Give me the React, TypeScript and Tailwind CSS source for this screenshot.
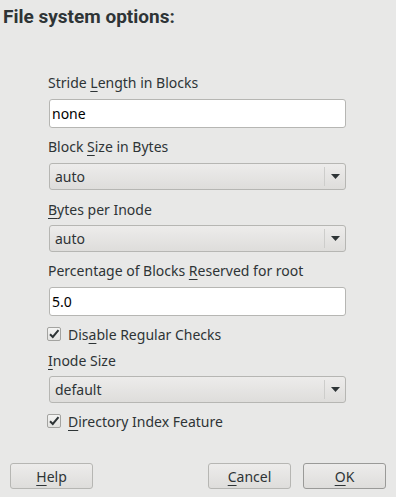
import React from "react";

const font = { fontFamily: '"Noto Sans", "Open Sans", sans-serif' };

function U({ children }: { children: React.ReactNode }) {
  return <span className="underline decoration-1 underline-offset-[3px]">{children}</span>;
}

function Label({ children, className = "" }: { children: React.ReactNode; className?: string }) {
  return (
    <div className={`h-[20px] leading-[20px] text-[14px] text-[#2e3436] -ml-px ${className}`}>{children}</div>
  );
}

function Entry({ value, className = "" }: { value: string; className?: string }) {
  return (
    <div
      className={`h-[29px] rounded-[3px] border border-[#b6b6b3] bg-white flex items-center pl-[2px] text-[14px] text-black ${className}`}
    >
      {value}
    </div>
  );
}

function Combo({ value, className = "" }: { value: string; className?: string }) {
  return (
    <div
      className={`h-[27px] rounded-[3px] border border-[#b6b6b3] bg-gradient-to-b from-[#edeceb] to-[#dedddb] flex items-center text-[14px] text-[#2e3436] ${className}`}
    >
      <div className="flex-1 pl-[5px]">{value}</div>
      <div className="w-px h-[19px] bg-[#cdcdcb]" />
      <div className="w-[20px] flex items-center justify-center">
        <svg width="9" height="5" viewBox="0 0 9 5">
          <path d="M0 0 H9 L4.5 5 Z" fill="#2e3436" />
        </svg>
      </div>
    </div>
  );
}

function Check({ children, className = "" }: { children: React.ReactNode; className?: string }) {
  return (
    <div className={`h-[20px] flex items-center text-[14px] text-[#2e3436] -ml-[2px] ${className}`}>
      <div className="w-[14px] h-[14px] rounded-[2px] border border-[#a3a3a0] bg-gradient-to-b from-[#f4f4f3] to-[#e3e3e1] flex items-center justify-center">
        <svg width="12" height="12" viewBox="0 0 12 12">
          <path d="M2 6.2 L4.8 9 L10.5 2.2" stroke="#2e3436" strokeWidth="2" fill="none" />
        </svg>
      </div>
      <span className="ml-[7px]">{children}</span>
    </div>
  );
}

function Button({ children, def = false }: { children: React.ReactNode; def?: boolean }) {
  return (
    <div
      className={`w-[83px] h-[26px] rounded-[3px] border ${
        def ? "border-[#9a9a98]" : "border-[#b6b6b3]"
      } bg-gradient-to-b from-[#edeceb] to-[#dedddb] flex items-center justify-center text-[14px] text-[#2e3436]`}
    >
      {children}
    </div>
  );
}

export default function App() {
  return (
    <div className="w-[396px] h-[497px] bg-[#e8e8e7] relative overflow-hidden" style={font}>
      <div
        className="pt-[6px] pl-[3px] h-[28px] text-[19px] leading-[22px] font-bold text-[#2e3436]"
        style={{ fontFamily: 'Roboto, "Noto Sans", sans-serif' }}
      >
        File system options:
      </div>
      <div className="ml-[49px] w-[297px] flex flex-col">
        <Label className="mt-[45px]">
          Stride <U>L</U>ength in Blocks
        </Label>
        <Entry value="none" className="mt-[6px]" />
        <Label className="mt-[9px]">
          Block <U>S</U>ize in Bytes
        </Label>
        <Combo value="auto" className="mt-[6px]" />
        <Label className="mt-[10px]">
          <U>B</U>ytes per Inode
        </Label>
        <Combo value="auto" className="mt-[5px]" />
        <Label className="mt-[9px]">
          Percentage of Blocks <U>R</U>eserved for root
        </Label>
        <Entry value="5.0" className="mt-[6px]" />
        <Check className="mt-[8px]">
          Dis<U>a</U>ble Regular Checks
        </Check>
        <Label className="mt-[7px]">
          <U>I</U>node Size
        </Label>
        <Combo value="default" className="mt-[5px]" />
        <Check className="mt-[8px]">
          <U>D</U>irectory Index Feature
        </Check>
      </div>
      <div className="mt-[32px] flex px-[10px]">
        <Button>
          <U>H</U>elp
        </Button>
        <div className="flex-1" />
        <Button>
          <U>C</U>ancel
        </Button>
        <div className="w-[12px]" />
        <Button def>
          <U>O</U>K
        </Button>
      </div>
    </div>
  );
}
